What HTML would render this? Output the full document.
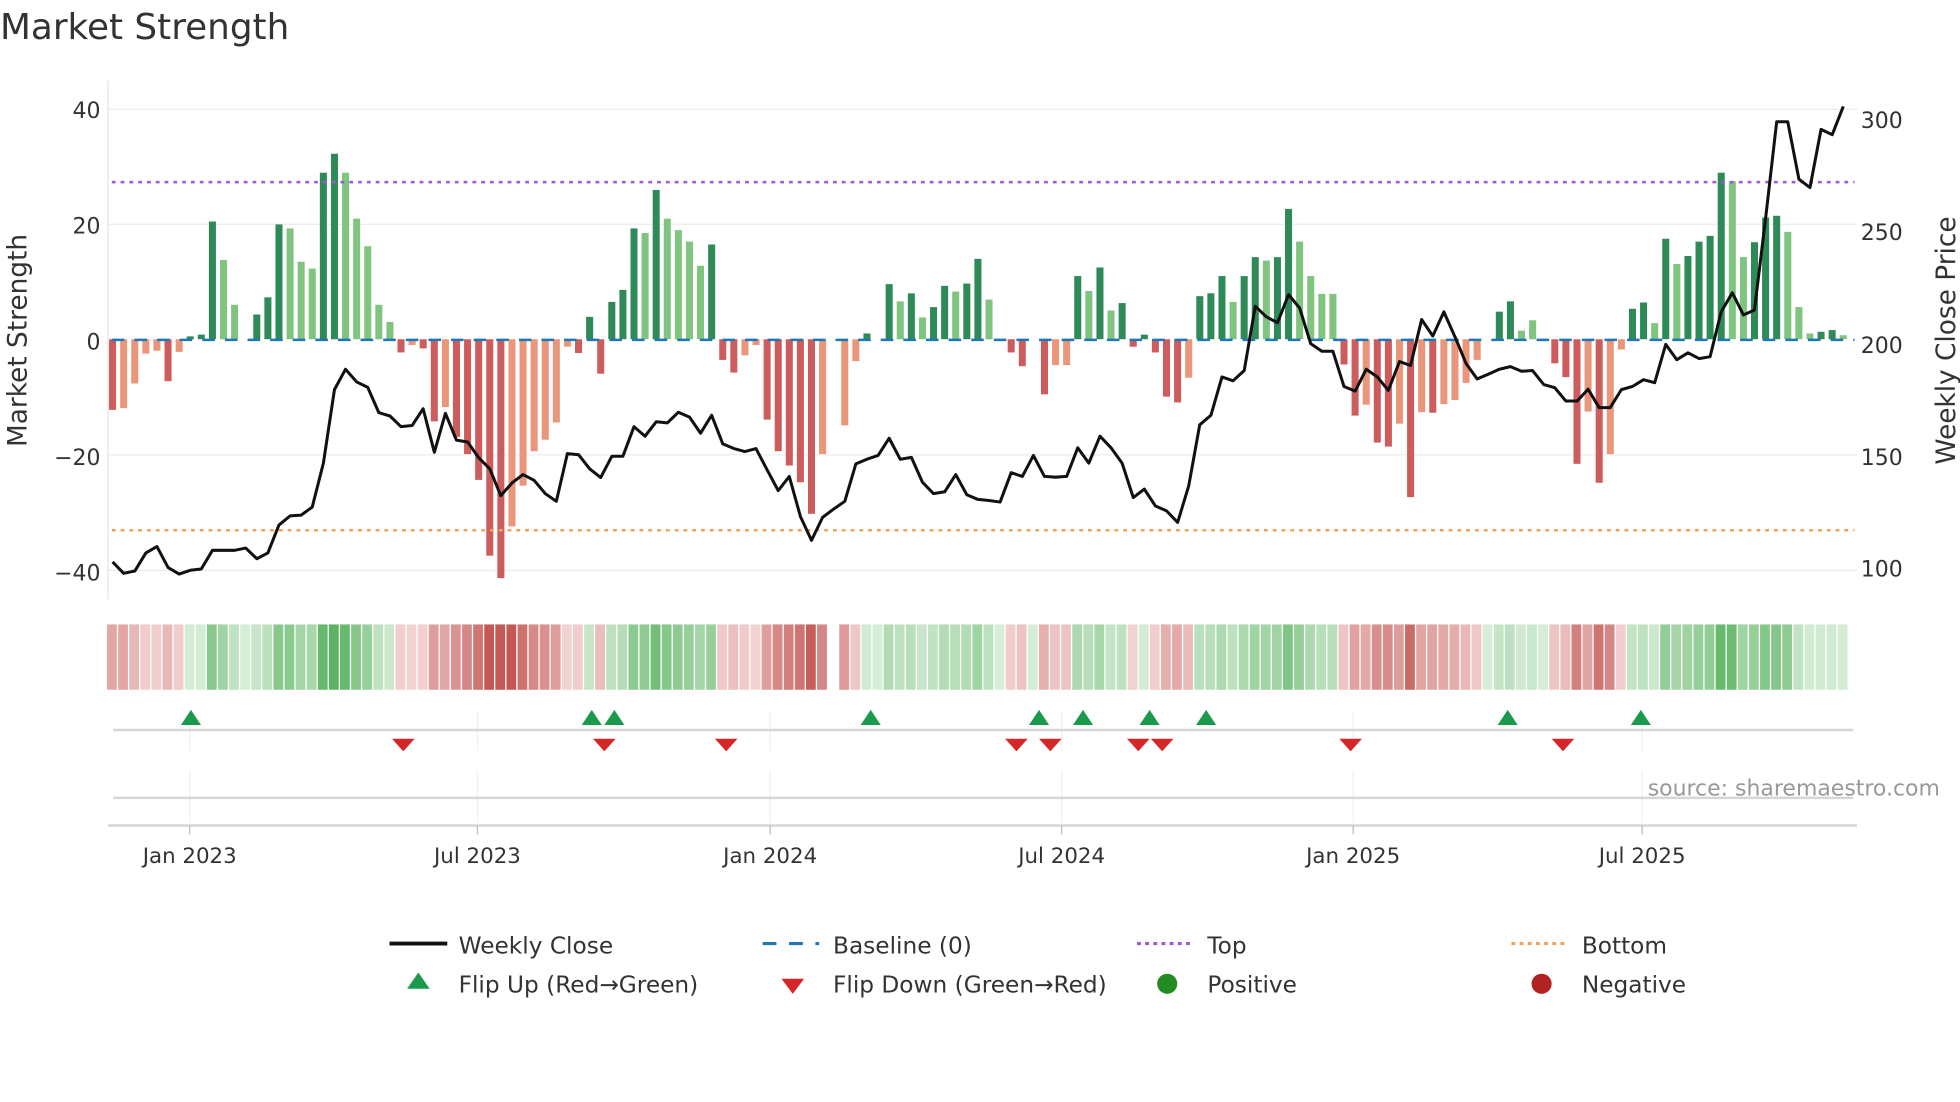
<!DOCTYPE html>
<html><head><meta charset="utf-8"><style>
html,body{margin:0;padding:0;background:#fff;width:1960px;height:1102px;overflow:hidden}
svg{display:block}
text{font-family:"DejaVu Sans","Liberation Sans",sans-serif;fill:#333}
</style></head><body>
<svg id="s" width="1960" height="1102" viewBox="0 0 1560 877.1" xmlns="http://www.w3.org/2000/svg">
<text x="0" y="31" font-size="28.5" fill="#333">Market Strength</text>
<g id="grid" stroke="#ececec" stroke-width="1">
<line x1="86" x2="1478" y1="87" y2="87"/><line x1="86" x2="1478" y1="178.5" y2="178.5"/>
<line x1="86" x2="1478" y1="362" y2="362"/><line x1="86" x2="1478" y1="454" y2="454"/>
</g>
<line x1="86" x2="86" y1="64" y2="477" stroke="#e4e4e4"/>
<g font-size="17.5" text-anchor="end">
<text x="80" y="94">40</text><text x="80" y="186">20</text><text x="80" y="278">0</text>
<text x="80" y="370">−20</text><text x="80" y="462">−40</text>
</g>
<g font-size="17.5">
<text x="1481" y="102">300</text><text x="1481" y="191">250</text><text x="1481" y="281">200</text>
<text x="1481" y="370">150</text><text x="1481" y="459">100</text>
</g>
<text transform="translate(21,271) rotate(-90)" font-size="21" text-anchor="middle">Market Strength</text>
<text transform="translate(1556,271) rotate(-90)" font-size="21" text-anchor="middle">Weekly Close Price</text>
<g id="bars"></g>
<line x1="89" x2="1476" y1="270.5" y2="270.5" stroke="#1f77b4" stroke-width="2" stroke-dasharray="10,8"/>
<line x1="89" x2="1476" y1="145" y2="145" stroke="#9b59d6" stroke-width="2" stroke-dasharray="3,4"/>
<line x1="89" x2="1476" y1="422" y2="422" stroke="#f0a15a" stroke-width="2" stroke-dasharray="3,4"/>
<polyline id="pl" fill="none" stroke="#111" stroke-width="2.4" stroke-linejoin="round"/>
<g id="heat"></g>
<g stroke="#eef0f3" stroke-width="1">
<line x1="151" x2="151" y1="566" y2="598"/><line x1="380" x2="380" y1="566" y2="598"/><line x1="613" x2="613" y1="566" y2="598"/><line x1="845" x2="845" y1="566" y2="598"/><line x1="1077" x2="1077" y1="566" y2="598"/><line x1="1307" x2="1307" y1="566" y2="598"/>
<line x1="151" x2="151" y1="613" y2="655"/><line x1="380" x2="380" y1="613" y2="655"/><line x1="613" x2="613" y1="613" y2="655"/><line x1="845" x2="845" y1="613" y2="655"/><line x1="1077" x2="1077" y1="613" y2="655"/><line x1="1307" x2="1307" y1="613" y2="655"/>
</g>
<line x1="90" x2="1475" y1="581" y2="581" stroke="#d6d6d6" stroke-width="2"/>
<line x1="90" x2="1475" y1="635" y2="635" stroke="#d6d6d6" stroke-width="2"/>
<line x1="86" x2="1478" y1="657" y2="657" stroke="#d6d6d6" stroke-width="2"/>
<g stroke="#bbb" stroke-width="1">
<line x1="151" x2="151" y1="657" y2="664"/><line x1="380" x2="380" y1="657" y2="664"/><line x1="613" x2="613" y1="657" y2="664"/><line x1="845" x2="845" y1="657" y2="664"/><line x1="1077" x2="1077" y1="657" y2="664"/><line x1="1307" x2="1307" y1="657" y2="664"/>
</g>
<g id="flips"></g>
<text x="1544" y="633" font-size="17.5" text-anchor="end" fill="#999" style="fill:#999">source: sharemaestro.com</text>
<g font-size="17" text-anchor="middle">
<text x="151" y="687">Jan 2023</text><text x="380" y="687">Jul 2023</text><text x="613" y="687">Jan 2024</text>
<text x="845" y="687">Jul 2024</text><text x="1077" y="687">Jan 2025</text><text x="1307" y="687">Jul 2025</text>
</g>
<g font-size="18.5">
<line x1="310" x2="356" y1="751" y2="751" stroke="#111" stroke-width="3"/>
<text x="365" y="759">Weekly Close</text>
<line x1="607" x2="652" y1="751" y2="751" stroke="#1f77b4" stroke-width="2.5" stroke-dasharray="11,10"/>
<text x="663" y="759">Baseline (0)</text>
<line x1="905" x2="948" y1="751" y2="751" stroke="#9b59d6" stroke-width="2.5" stroke-dasharray="3,3.5"/>
<text x="961" y="759">Top</text>
<line x1="1203" x2="1246" y1="751" y2="751" stroke="#f0a15a" stroke-width="2.5" stroke-dasharray="3,3.5"/>
<text x="1259" y="759">Bottom</text>
<polygon points="333,774 342,787 324,787" fill="#1a9a4a"/>
<text x="365" y="790">Flip Up (Red→Green)</text>
<polygon points="622,779 640,779 631,791" fill="#d62728"/>
<text x="663" y="790">Flip Down (Green→Red)</text>
<circle cx="929" cy="783" r="8" fill="#228b22"/>
<text x="961" y="790">Positive</text>
<circle cx="1227" cy="783" r="8" fill="#b22222"/>
<text x="1259" y="790">Negative</text>
</g>
</svg>
<script>
var V=[-12.3,-12,-7.7,-2.5,-2,-7.3,-2.2,0.5,0.8,20.5,13.8,6,0,4.3,7.3,20,19.3,13.5,12.3,29,32.3,29,21,16.2,6,3,-2.3,-1,-1.6,-14.3,-11.8,-17,-20,-24.5,-37.7,-41.6,-32.6,-25.5,-19.5,-17.5,-14.5,-1.3,-2.4,3.9,-6,6.5,8.6,19.3,18.5,26,21,19,17,12.8,16.5,-3.6,-5.8,-2.8,-1,-14,-19.5,-22,-24.9,-30.4,-20,0,-15,-3.8,1,0,9.6,6.6,8,3.8,5.6,9.3,8.3,9.7,14,6.9,0.1,-2.3,-4.7,0,-9.6,-4.5,-4.5,11,8.4,12.5,5,6.3,-1.3,0.8,-2.3,-10,-11,-6.7,7.5,8,11,6.5,11,14.3,13.7,14.3,22.7,17,11,7.9,7.9,-4.4,-13.3,-11.4,-18,-18.7,-14.7,-27.5,-12.7,-12.8,-11.3,-10.6,-7.6,-3.6,0,4.8,6.6,1.5,3.3,0,-4.2,-6.6,-21.7,-12.6,-25,-20,-1.8,5.3,6.4,2.8,17.5,13.1,14.5,17,18,29,27.5,14.3,16.9,21.2,21.5,18.7,5.6,1,1.3,1.6,0.7];
var D="dlllldldddll0dddllld"+"dllllldldd"+"ldddddllll"+"llddddddld"+"lllldddlld"+"ddddl0lld0"+"dldlddlddl"+"ldd0dlldld"+"lddddddldd"+"dlddlddlll"+"lddlddldld"+"llll0ddll0"+"dddldllddl"+"dlddddlldd"+"dlllddl";
var L=[1468,1498,1492,1445,1428,1483,1500,1490,1487,1438,1438,1438,1432,1460,1445,1372,1348,1346,1325,1210,1018,965,998,1012,1078,1087,1115,1112,1068,1182,1080,1150,1155,1196,1225,1295,1262,1240,1255,1290,1310,1185,1188,1225,1248,1192,1192,1115,1140,1102,1105,1077,1090,1132,1085,1160,1172,1180,1172,1228,1282,1245,1350,1412,1352,1330,1310,1212,1200,1190,1145,1200,1195,1260,1290,1285,1240,1293,1305,1308,1312,1235,1245,1190,1245,1247,1245,1170,1210,1140,1170,1210,1300,1278,1322,1335,1365,1270,1110,1085,985,995,968,800,828,843,770,805,898,918,918,1010,1022,965,985,1020,945,955,835,878,815,880,950,990,978,965,958,970,968,1005,1013,1048,1048,1017,1065,1065,1018,1010,992,1000,900,940,922,937,932,815,765,823,810,570,318,318,468,490,338,352,278];
var NS="http://www.w3.org/2000/svg";
function el(t,a,p){var e=document.createElementNS(NS,t);for(var k in a)e.setAttribute(k,a[k]);p.appendChild(e);return e;}
var bars=document.getElementById('bars'),heat=document.getElementById('heat'),pts=[];
function mix(a,b,t){return 'rgb('+a.map(function(v,i){return Math.round(v+(b[i]-v)*t)}).join(',')+')';}
for(var i=0;i<V.length;i++){
 var x=89.6+8.83*i,v=V[i],d=D[i]==='d';
 if(v!==0){
  var h=Math.abs(v)*4.57,y=v>0?270-h:270;
  var c=v>0?(d?'#2e8b57':'#7fc47f'):(d?'#cd5c5c':'#e9967a');
  el('rect',{x:x-2.8,y:y,width:5.6,height:h,fill:c},bars);
 }
 if(i!==65){
  var t=Math.min(1,Math.abs(v)/32);
  var col=v>=0?mix([214,237,215],[92,180,98],t):mix([244,214,214],[196,88,84],t);
  el('rect',{x:x-4.4,y:497,width:7.8,height:52,fill:col},heat);
 }
 pts.push(x.toFixed(1)+','+(L[i]*0.3046).toFixed(1));
}
document.getElementById('pl').setAttribute('points',pts.join(' '));
var fl=document.getElementById('flips');
[152,471,489,693,827,862,915,960,1200,1306].forEach(function(x){el('polygon',{points:x+',565 '+(x+8)+',577 '+(x-8)+',577',fill:'#1a9a4a'},fl);});
[321,481,578,809,836,906,925,1075,1244].forEach(function(x){el('polygon',{points:(x-9)+',588 '+(x+9)+',588 '+x+',598',fill:'#d62728'},fl);});
</script>
</body></html>
